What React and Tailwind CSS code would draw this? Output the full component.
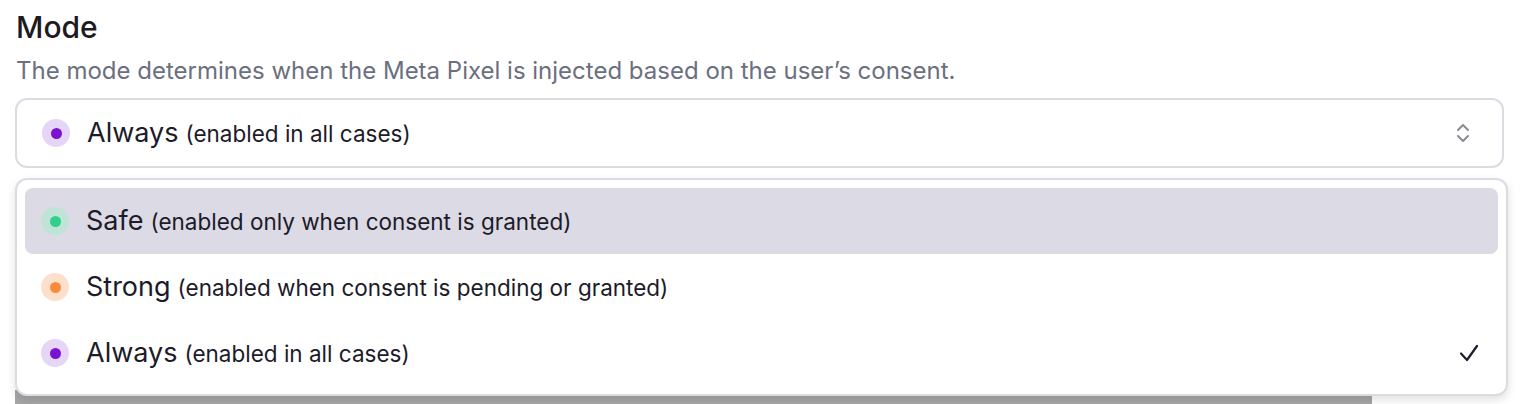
import React from 'react';

const modes = [
    { key: 'safe', label: 'Safe', hint: '(enabled only when consent is granted)', ring: 'bg-[#bfe3d6]', dot: 'bg-[#2fcf8c]' },
    { key: 'strong', label: 'Strong', hint: '(enabled when consent is pending or granted)', ring: 'bg-[#fde0cc]', dot: 'bg-[#f98a3c]' },
    { key: 'always', label: 'Always', hint: '(enabled in all cases)', ring: 'bg-[#e6d6f6]', dot: 'bg-[#7a12d0]' },
];

const Dot = ({ mode }) => (
    <span className={`flex h-7 w-7 shrink-0 items-center justify-center rounded-full ${mode.ring}`}>
        <span className={`h-[11px] w-[11px] rounded-full ${mode.dot}`} />
    </span>
);

const Label = ({ mode }) => (
    <span className="flex items-baseline gap-[7px] text-[#1c1b29]">
        <span className="text-[27px]">{mode.label}</span>
        <span className="text-[22.5px]">{mode.hint}</span>
    </span>
);

const UpDown = () => (
    <svg width="14" height="22" viewBox="0 0 14 22" fill="none" stroke="#8a8a95" strokeWidth="2" strokeLinecap="round" strokeLinejoin="round" className="ml-auto">
        <path d="M2 8 7 3l5 5" />
        <path d="M2 14l5 5 5-5" />
    </svg>
);

const Tick = () => (
    <svg width="20" height="18" viewBox="0 0 20 18" fill="none" stroke="#1c1b29" strokeWidth="2.2" strokeLinecap="round" strokeLinejoin="round" className="ml-auto">
        <path d="M2 9.5 8 16 18 2" />
    </svg>
);

const App = () => {
    const selected = modes[2];
    const active = 'safe';

    return (
        <div className="h-[404px] w-[1522px] overflow-hidden bg-white font-['Inter',sans-serif]">
            <div className="px-4 pt-[9px]">
                <h2 className="text-[30px] font-medium leading-9 text-[#1c1b22]">Mode</h2>
                <p className="mt-[10px] text-[24px] leading-8 text-[#6b6f80]">
                    The mode determines when the Meta Pixel is injected based on the user’s consent.
                </p>
            </div>

            {/* Select trigger */}
            <div className="relative ml-[15px] mt-[11px] w-[1489px]">
                <button className="flex h-[70px] w-full items-center gap-[17px] rounded-xl border-2 border-[#dcdbe2] bg-white pl-[25px] pr-[32px] text-left">
                    <Dot mode={selected} />
                    <Label mode={selected} />
                    <UpDown />
                </button>

                {/* Options menu */}
                <div className="absolute left-0 top-[80px] z-10 w-[1493px] rounded-xl border-2 border-[#dcdbe2] bg-white p-2 shadow-[0_4px_10px_rgba(0,0,0,0.12)]">
                    {modes.map(mode => (
                        <div
                            key={mode.key}
                            className={`flex h-[66px] items-center gap-[17px] rounded-lg pl-4 pr-[19px] ${mode.key === active ? 'bg-[#dcdae4]' : ''}`}
                        >
                            <Dot mode={mode} />
                            <Label mode={mode} />
                            {mode.key === selected.key && <Tick />}
                        </div>
                    ))}
                </div>
            </div>

            {/* Dimmed content below the menu */}
            <div className="ml-[15px] mt-[222px] h-[14px] w-[1357px] bg-[#a6a6a6]" />
        </div>
    );
};

export default App;
